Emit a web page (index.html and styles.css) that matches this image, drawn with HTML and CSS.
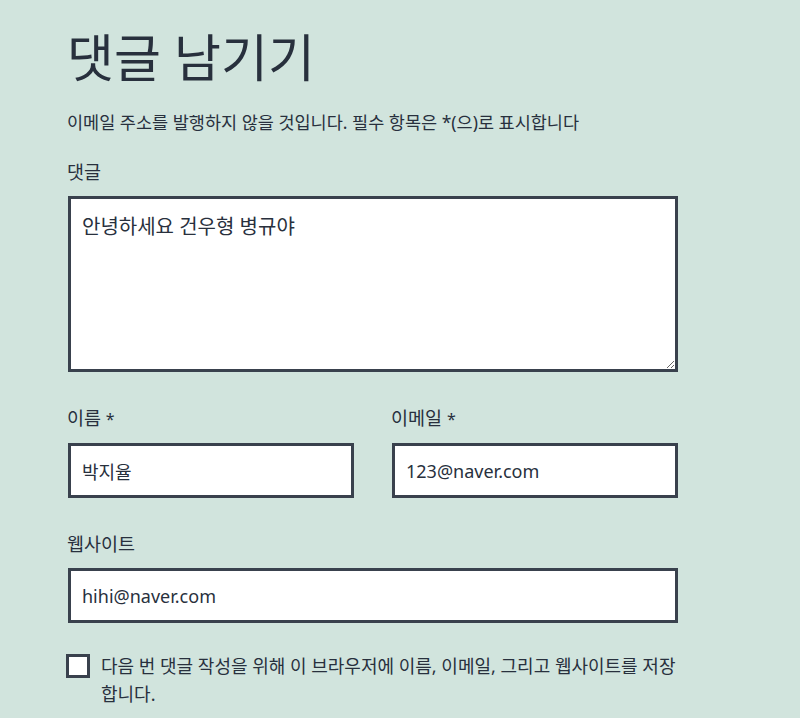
FILE: index.html
```html
<!DOCTYPE html>
<html lang="ko">
<head>
    <meta charset="UTF-8">
    <title>댓글 남기기</title>
    <link rel="stylesheet" href="styles.css">
</head>
<body>
<div id="respond" class="comment-respond">
    <h3 class="reply-title">댓글 남기기</h3>
    <form class="comment-form" action="#">
        <p class="comment-notes">이메일 주소를 발행하지 않을 것입니다. 필수 항목은 *(으)로 표시합니다</p>
        <p class="field">
            <label for="comment">댓글</label>
            <textarea id="comment" class="ko" rows="5">안녕하세요 건우형 병규야</textarea>
        </p>
        <div class="field-row">
            <p class="field">
                <label for="author">이름 <span class="required">*</span></label>
                <input id="author" class="ko" type="text" value="박지율">
            </p>
            <p class="field">
                <label for="email">이메일 <span class="required">*</span></label>
                <input id="email" type="text" value="123@naver.com">
            </p>
        </div>
        <p class="field">
            <label for="url">웹사이트</label>
            <input id="url" type="text" value="hihi@naver.com">
        </p>
        <p class="cookies">
            <input id="cookies" type="checkbox">
            <label for="cookies">다음 번 댓글 작성을 위해 이 브라우저에 이름, 이메일, 그리고 웹사이트를 저장합니다.</label>
        </p>
    </form>
</div>
</body>
</html>
```
FILE: styles.css
```css
*{margin:0;padding:0;box-sizing:border-box;}

body{
    background:#d1e4dd;
    color:#28303d;
    font-family:"Noto Sans","Noto Sans CJK KR",sans-serif;
}

.comment-respond{width:678px;padding:24px 0 0 68px;}

.reply-title{font-size:51px;font-weight:400;line-height:1.3;margin-left:-1px;}

.comment-notes{font-size:17.5px;line-height:28px;margin:18px 0 21px -1px;}

.field{display:flex;flex-direction:column;margin-bottom:31px;}
.field label{font-size:18.5px;line-height:30px;margin:0 0 9px -1px;}
.field .required{font-size:16px;}

textarea,input[type=text]{
    font-family:inherit;
    font-size:18px;
    color:#28303d;
    background:#fff;
    border:3px solid #39414d;
    border-radius:0;
    outline:none;
    padding:0 11px;
}
textarea{height:176px;line-height:32px;padding-top:12px;}
input[type=text]{height:55px;}
.ko{font-size:20px;}

.field-row{display:flex;gap:38px;}
.field-row .field{flex:1;}

.cookies{display:flex;align-items:flex-start;gap:11px;font-size:18px;line-height:28px;margin-top:-2px;}
.cookies input{
    appearance:none;
    flex:none;
    width:24px;
    height:24px;
    margin:2px 0 0 -2px;
    background:#fff;
    border:3px solid #39414d;
}
```
